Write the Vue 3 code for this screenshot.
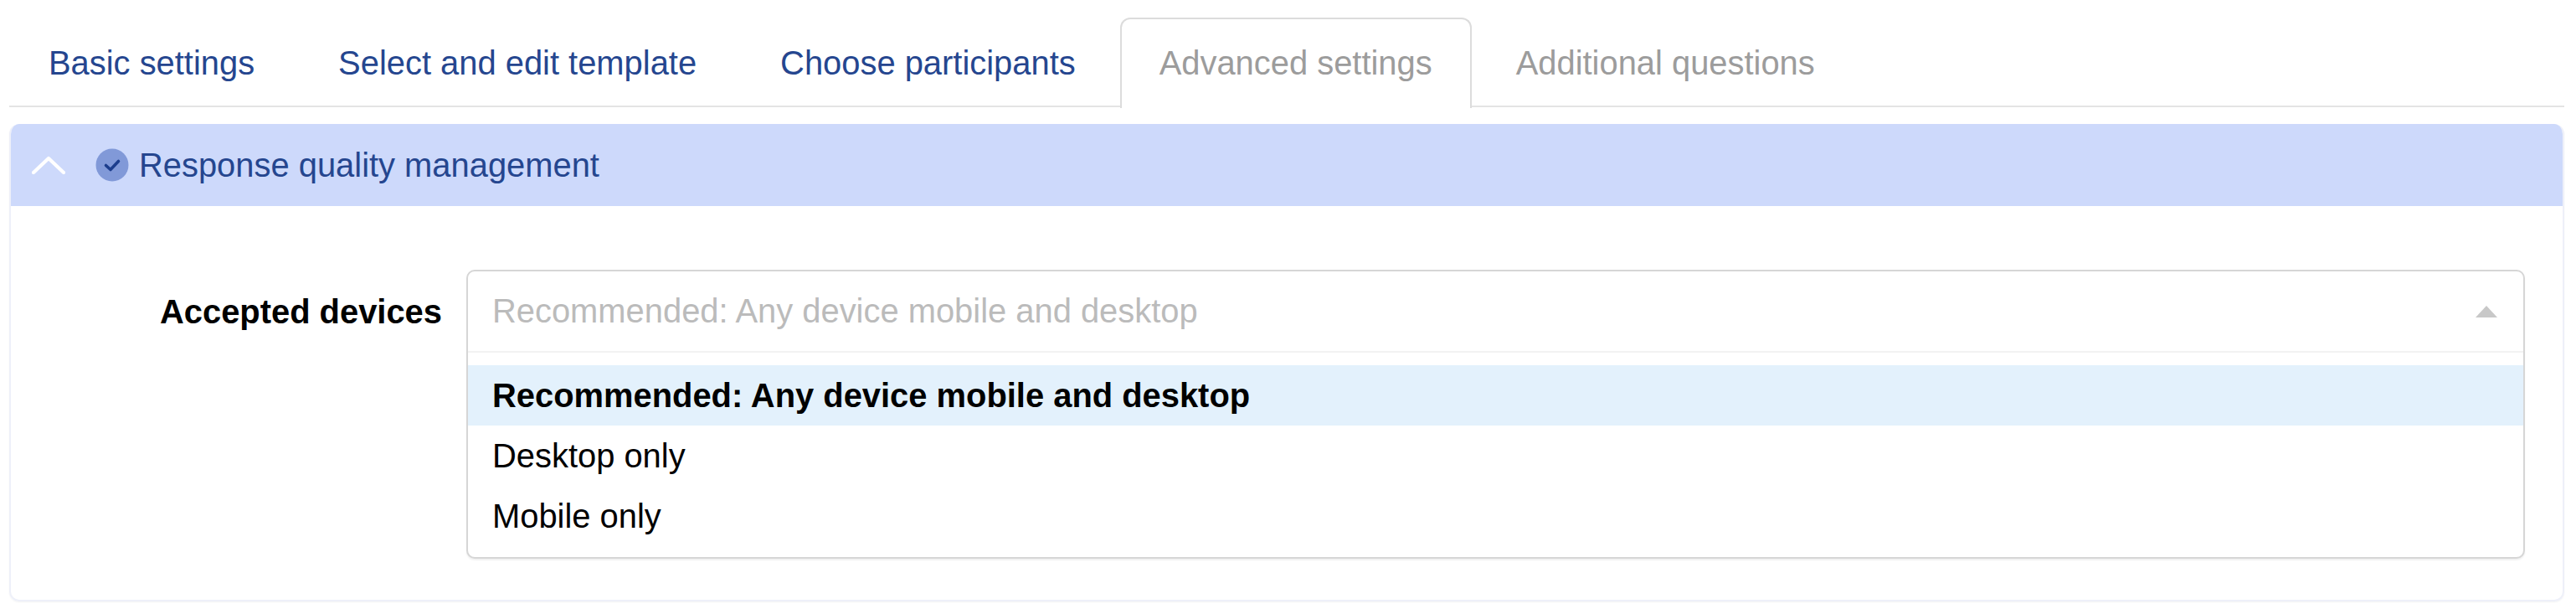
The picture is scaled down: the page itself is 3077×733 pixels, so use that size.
<template>
  <div class="page">
    <div class="tabs">
      <div
        v-for="tab in tabs"
        :key="tab.name"
        class="tab"
        :class="{ active: tab.active, muted: tab.muted }"
      >
        {{ tab.name }}
      </div>
    </div>

    <div class="panel">
      <div class="panel-header">
        <svg class="chevron" viewBox="0 0 40 22" width="40" height="22">
          <path d="M2 20 L20 3 L38 20" fill="none" stroke="#fff" stroke-width="4.2" stroke-linecap="round" stroke-linejoin="round" />
        </svg>
        <svg class="status" viewBox="0 0 40 40" width="40" height="40">
          <circle cx="20" cy="20" r="19.5" fill="#8199d8" />
          <path d="M12.5 20.5 L18 25.5 L27.5 15.5" fill="none" stroke="#1c3d8c" stroke-width="3.6" stroke-linecap="round" stroke-linejoin="round" />
        </svg>
        <span class="panel-title">Response quality management</span>
      </div>

      <div class="panel-body">
        <label class="field-label">Accepted devices</label>
        <div class="select">
          <div class="select-control">
            <span class="placeholder">Recommended: Any device mobile and desktop</span>
            <span class="caret"></span>
          </div>
          <div class="select-menu">
            <div
              v-for="(option, i) in options"
              :key="option"
              class="option"
              :class="{ selected: i === 0 }"
            >
              {{ option }}
            </div>
          </div>
        </div>
      </div>
    </div>
  </div>
</template>

<script setup>
const tabs = [
  { name: 'Basic settings' },
  { name: 'Select and edit template' },
  { name: 'Choose participants' },
  { name: 'Advanced settings', active: true, muted: true },
  { name: 'Additional questions', muted: true }
]

const options = [
  'Recommended: Any device mobile and desktop',
  'Desktop only',
  'Mobile only'
]
</script>

<style>
html, body {
  background: #fff;
}
</style>

<style scoped>
.page {
  width: 3077px;
  height: 733px;
  box-sizing: border-box;
  padding: 0 14px 0 11px;
  font-family: "Liberation Sans", Arial, sans-serif;
  font-size: 39.9px;
  background: #fff;
}

.tabs {
  display: flex;
  height: 126px;
  border-bottom: 2px solid #e4e4e4;
}

.tab {
  display: flex;
  align-items: center;
  box-sizing: border-box;
  height: 108px;
  margin-top: 21px;
  margin-right: 6px;
  padding: 0 45px 2px;
  border: 2px solid transparent;
  border-bottom: none;
  border-radius: 12px 12px 0 0;
  color: #25468f;
}

.tab.muted {
  color: #9c9c9c;
}

.tab.active {
  border-color: #dcdcdc;
  background: #fff;
}

.panel {
  margin-top: 20px;
  height: 570px;
  box-sizing: border-box;
  border: 2px solid #eef0f9;
  border-top: none;
  border-radius: 12px;
  overflow: hidden;
  box-shadow: 0 1px 2px rgba(0, 0, 0, 0.05);
}

.panel-header {
  display: flex;
  align-items: center;
  height: 98px;
  margin: 0 -2px;
  padding-left: 27px;
  background: #cdd9fb;
}

.chevron {
  margin-right: 36px;
}

.status {
  margin-right: 12px;
}

.panel-title {
  color: #25468f;
}

.panel-body {
  display: flex;
  align-items: flex-start;
  padding: 76px 45px 0 0;
}

.field-label {
  width: 515px;
  margin-top: 28px;
  text-align: right;
  font-weight: 700;
  color: #000;
  flex-shrink: 0;
}

.select {
  flex: 1;
  margin-left: 29px;
  box-sizing: border-box;
  height: 345px;
  border: 2px solid #d6d6d6;
  border-radius: 10px;
  background: #fff;
  box-shadow: 0 2px 2px rgba(0, 0, 0, 0.06);
}

.select-control {
  display: flex;
  align-items: center;
  justify-content: space-between;
  height: 95px;
  padding: 0 31px 0 29px;
  border-bottom: 2px solid #f2f2f2;
}

.placeholder {
  color: #bbb;
}

.caret {
  width: 0;
  height: 0;
  border-left: 13px solid transparent;
  border-right: 13px solid transparent;
  border-bottom: 14px solid #c8c8c8;
}

.select-menu {
  padding-top: 15px;
}

.option {
  display: flex;
  align-items: center;
  height: 72px;
  padding: 0 29px;
  color: #000;
}

.option.selected {
  font-weight: 700;
  background: #e3f1fc;
}
</style>
